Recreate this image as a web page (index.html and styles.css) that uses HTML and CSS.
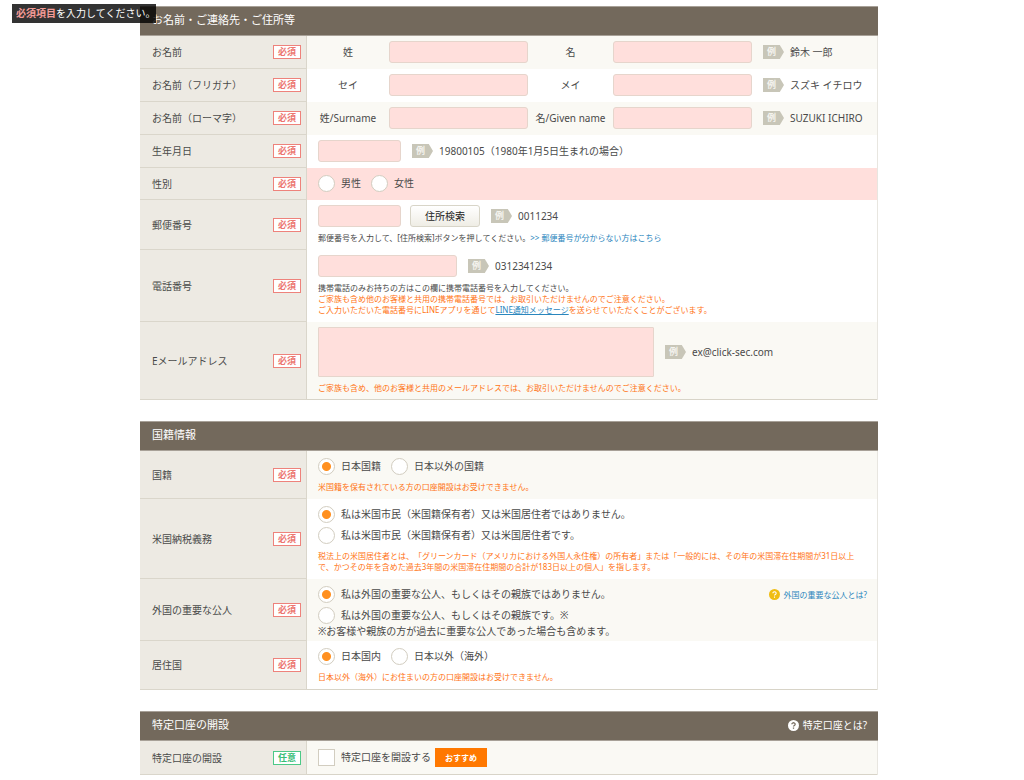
FILE: index.html
```html
<!DOCTYPE html>
<html lang="ja">
<head>
<meta charset="utf-8">
<meta name="viewport" content="width=device-width, initial-scale=1">
<title>口座開設申込</title>
<link rel="stylesheet" href="styles.css">
</head>
<body>
<p class="toast" role="status"><strong>必須項目</strong>を入力してください。</p>
<form class="form">
  <section class="panel">
    <header class="panel-head"><h2>お名前・ご連絡先・ご住所等</h2></header>
    <div class="row tint">
      <div class="term"><span>お名前</span><em class="badge">必須</em></div>
      <div class="field"><div class="names">
        <label for="sei">姓</label><input class="box" id="sei" type="text">
        <label for="mei">名</label><input class="box" id="mei" type="text">
        <span class="example"><i class="tag">例</i>鈴木 一郎</span>
      </div></div>
    </div>
    <div class="row">
      <div class="term"><span>お名前（フリガナ）</span><em class="badge">必須</em></div>
      <div class="field"><div class="names">
        <label for="sei-kana">セイ</label><input class="box" id="sei-kana" type="text">
        <label for="mei-kana">メイ</label><input class="box" id="mei-kana" type="text">
        <span class="example"><i class="tag">例</i>スズキ イチロウ</span>
      </div></div>
    </div>
    <div class="row tint">
      <div class="term"><span>お名前（ローマ字）</span><em class="badge">必須</em></div>
      <div class="field"><div class="names">
        <label for="surname">姓/Surname</label><input class="box" id="surname" type="text">
        <label for="given">名/Given name</label><input class="box" id="given" type="text">
        <span class="example"><i class="tag">例</i>SUZUKI ICHIRO</span>
      </div></div>
    </div>
    <div class="row">
      <div class="term"><label for="birth">生年月日</label><em class="badge">必須</em></div>
      <div class="field"><div class="line">
        <input class="box short" id="birth" type="text">
        <span class="example"><i class="tag">例</i>19800105（1980年1月5日生まれの場合）</span>
      </div></div>
    </div>
    <div class="row alert">
      <div class="term"><span>性別</span><em class="badge">必須</em></div>
      <div class="field choices roomy"><div class="line">
        <label class="choice"><input type="radio" name="sex">男性</label>
        <label class="choice"><input type="radio" name="sex">女性</label>
      </div></div>
    </div>
    <div class="row">
      <div class="term"><label for="zip">郵便番号</label><em class="badge">必須</em></div>
      <div class="field noted">
        <div class="line">
          <input class="box short" id="zip" type="text">
          <button class="search" type="button">住所検索</button>
          <span class="example"><i class="tag">例</i>0011234</span>
        </div>
        <p class="note plain">郵便番号を入力して、[住所検索]ボタンを押してください。<a href="#">&gt;&gt; 郵便番号が分からない方はこちら</a></p>
      </div>
    </div>
    <div class="row">
      <div class="term"><label for="tel">電話番号</label><em class="badge">必須</em></div>
      <div class="field noted">
        <div class="line">
          <input class="box" id="tel" type="tel">
          <span class="example"><i class="tag">例</i>0312341234</span>
        </div>
        <div class="notes">
          <p class="note plain">携帯電話のみお持ちの方はこの欄に携帯電話番号を入力してください。</p>
          <p class="note">ご家族も含め他のお客様と共用の携帯電話番号では、お取引いただけませんのでご注意ください。</p>
          <p class="note">ご入力いただいた電話番号にLINEアプリを通じて<a class="underlined" href="#">LINE通知メッセージ</a>を送らせていただくことがございます。</p>
        </div>
      </div>
    </div>
    <div class="row tint">
      <div class="term"><label for="mail">Eメールアドレス</label><em class="badge">必須</em></div>
      <div class="field noted">
        <div class="line">
          <textarea class="box mail" id="mail"></textarea>
          <span class="example"><i class="tag">例</i>ex@click-sec.com</span>
        </div>
        <p class="note">ご家族も含め、他のお客様と共用のメールアドレスでは、お取引いただけませんのでご注意ください。</p>
      </div>
    </div>
  </section>

  <section class="panel">
    <header class="panel-head"><h2>国籍情報</h2></header>
    <div class="row tint">
      <div class="term"><span>国籍</span><em class="badge">必須</em></div>
      <div class="field choices">
        <div class="line">
          <label class="choice"><input type="radio" name="nation" checked>日本国籍</label>
          <label class="choice"><input type="radio" name="nation">日本以外の国籍</label>
        </div>
        <p class="note">米国籍を保有されている方の口座開設はお受けできません。</p>
      </div>
    </div>
    <div class="row">
      <div class="term"><span>米国納税義務</span><em class="badge">必須</em></div>
      <div class="field choices">
        <div class="stack">
          <label class="choice"><input type="radio" name="tax" checked>私は米国市民（米国籍保有者）又は米国居住者ではありません。</label>
          <label class="choice"><input type="radio" name="tax">私は米国市民（米国籍保有者）又は米国居住者です。</label>
        </div>
        <p class="note">税法上の米国居住者とは、「グリーンカード（アメリカにおける外国人永住権）の所有者」または「一般的には、その年の米国滞在住期間が31日以上<br>で、かつその年を含めた過去3年間の米国滞在住期間の合計が183日以上の個人」を指します。</p>
      </div>
    </div>
    <div class="row tint">
      <div class="term"><span>外国の重要な公人</span><em class="badge">必須</em></div>
      <div class="field choices peps">
        <div class="split">
          <div class="stack">
            <label class="choice"><input type="radio" name="pep" checked>私は外国の重要な公人、もしくはその親族ではありません。</label>
            <label class="choice"><input type="radio" name="pep">私は外国の重要な公人、もしくはその親族です。※</label>
          </div>
          <a class="help" href="#"><svg viewBox="0 0 12 12" aria-hidden="true"><circle cx="6" cy="6" r="6" fill="#f0bd12"/><path d="M4.2 4.6a1.8 1.6 0 1 1 2.7 1.4Q6 6.500 6 7.200M6 8.300v1.200" fill="none" stroke="#fff" stroke-width="1.200"/></svg>外国の重要な公人とは?</a>
        </div>
        <p class="remark">※お客様や親族の方が過去に重要な公人であった場合も含めます。</p>
      </div>
    </div>
    <div class="row">
      <div class="term"><span>居住国</span><em class="badge">必須</em></div>
      <div class="field choices roomy">
        <div class="line">
          <label class="choice"><input type="radio" name="country" checked>日本国内</label>
          <label class="choice"><input type="radio" name="country">日本以外（海外）</label>
        </div>
        <p class="note">日本以外（海外）にお住まいの方の口座開設はお受けできません。</p>
      </div>
    </div>
  </section>

  <section class="panel">
    <header class="panel-head"><h2>特定口座の開設</h2>
      <a class="help light" href="#"><svg viewBox="0 0 12 12" aria-hidden="true"><circle cx="6" cy="6" r="6" fill="#fff"/><path d="M4.2 4.6a1.8 1.6 0 1 1 2.7 1.4Q6 6.500 6 7.200M6 8.300v1.200" fill="none" stroke="#73695c" stroke-width="1.400"/></svg>特定口座とは?</a>
    </header>
    <div class="row tint">
      <div class="term"><span>特定口座の開設</span><em class="badge optional">任意</em></div>
      <div class="field choices roomy"><div class="line account">
        <label class="choice"><input type="checkbox">特定口座を開設する</label>
        <strong class="recommend">おすすめ</strong>
      </div></div>
    </div>
  </section>
</form>
</body>
</html>
```
FILE: styles.css
```css
* { box-sizing: border-box; }

body {
  margin: 0;
  padding: 6px 6px 0 0;
  background: #fff;
  color: #4a4a4a;
  font: 10px/14px "Noto Sans", "Noto Sans CJK JP", sans-serif;
  text-spacing-trim: space-all;
}

h2, p { margin: 0; }
em, i { font-style: normal; }
a { color: #2a86bd; text-decoration: none; }
input, button, textarea { margin: 0; font: inherit; color: inherit; }

.toast {
  position: absolute;
  top: 4px;
  left: 12px;
  width: 144px;
  padding: 2px 0 3px 4px;
  background: rgba(0, 0, 0, .8);
  color: #fff;
  white-space: nowrap;
}
.toast strong { color: #f59c98; }

.form {
  display: flex;
  flex-direction: column;
  gap: 21px;
  max-width: 738px;
  margin: 0 auto;
}

.panel { border-right: 1px solid #e8e6e0; }

.panel-head {
  display: flex;
  justify-content: space-between;
  align-items: center;
  margin-right: -1px;
  padding: 6px 11px 8px 12px;
  border: solid #a8a198;
  border-width: 1px 0;
  background: #73695c;
  color: #fff;
}
.panel-head h2 { font-size: 11px; font-weight: 400; line-height: 14px; }

.row {
  display: grid;
  grid-template-columns: 167px minmax(0, 1fr);
  border-bottom: 1px solid #fff;
}
.row.tint { background: #faf9f4; border-color: #faf9f4; }
.row.alert { background: #ffdfdc; border-color: #ffdfdc; }
.row:last-child { border-color: #d8d4c8; }

.term {
  display: flex;
  justify-content: space-between;
  align-items: center;
  margin-bottom: -1px;
  padding: 0 5px 0 12px;
  border: solid #dad6cb;
  border-width: 0 1px 1px 0;
  background: #edeae3;
}

.badge {
  padding: 0 4px;
  border: 1px solid #ee827b;
  background: #fff;
  color: #ec7670;
  font-size: 9px;
  font-weight: 700;
  line-height: 12px;
}
.badge.optional { border-color: #4cc987; color: #38bd76; }

.field { padding: 5px 0 5px 11px; }
.field.noted { padding-bottom: 6px; }
.field.choices { padding: 7px 0 6px 11px; }
.field.peps { padding-bottom: 2px; }
.field.roomy { padding-bottom: 7px; }

.line { display: flex; align-items: center; gap: 11px; }

.names {
  display: grid;
  grid-template-columns: 60px 150px 85px 139px auto;
  align-items: center;
  justify-content: start;
}
.names label { text-align: center; white-space: nowrap; }
.names .box:nth-child(2) { justify-self: end; }
.names .example { padding-left: 11px; }

.box {
  display: block;
  width: 139px;
  height: 22px;
  padding: 2px 5px;
  border: 1px solid #e6d5cc;
  border-radius: 3px;
  background: #ffdfdc;
}
.box.short { width: 83px; }
.box.mail { width: 336px; height: 50px; border-radius: 1px; resize: none; }

.example { display: flex; align-items: center; gap: 6px; white-space: nowrap; }
.tag {
  width: 21px;
  padding-left: 4px;
  background: #c8c6b8;
  color: #f4f3ee;
  font-size: 9px;
  font-weight: 700;
  line-height: 14px;
  clip-path: polygon(0 0, 80% 0, 100% 50%, 80% 100%, 0 100%);
}

.search {
  width: 70px;
  height: 22px;
  margin: 0 0 0 -2px;
  padding: 0;
  border: 1px solid #d8d5c8;
  border-radius: 3px;
  background: linear-gradient(#fff, #efede5);
  color: #222;
}

.note {
  margin-top: 5px;
  color: #ff7415;
  font-size: 8px;
  line-height: 11px;
  white-space: nowrap;
}
.choices .note { margin-top: 6px; }
.notes { margin-top: 5px; }
.notes .note { margin-top: 0; }
.note.plain { color: #4a4a4a; }
.underlined { text-decoration: underline; }

.stack { display: flex; flex-direction: column; align-items: flex-start; gap: 4px; }
.choice { display: flex; align-items: center; gap: 6px; line-height: 17px; }
.choice input {
  appearance: none;
  width: 17px;
  height: 17px;
  border: 1px solid #d2cdc0;
  background: #fff;
}
.choice input[type="radio"] { border-radius: 50%; }
.choice input[type="radio"]:checked { background: radial-gradient(circle, #ff9020 4px, #fff 5px); }
.choice input[type="checkbox"]:checked { background: #ff9020; }

.split { display: flex; justify-content: space-between; align-items: flex-start; }
.help { display: flex; align-items: center; gap: 4px; line-height: 17px; }
.help svg { width: 11px; height: 11px; }
.split .help { padding-right: 10px; font-size: 8px; }
.help.light { color: #fff; line-height: 14px; }

.choices .line { gap: 10px; }
.choices .account { gap: 4px; }
.account .choice { padding: 1px 0; }
.recommend {
  padding: 0 10px;
  background: #ff7800;
  color: #fff;
  font-size: 8px;
  line-height: 19px;
}
```
